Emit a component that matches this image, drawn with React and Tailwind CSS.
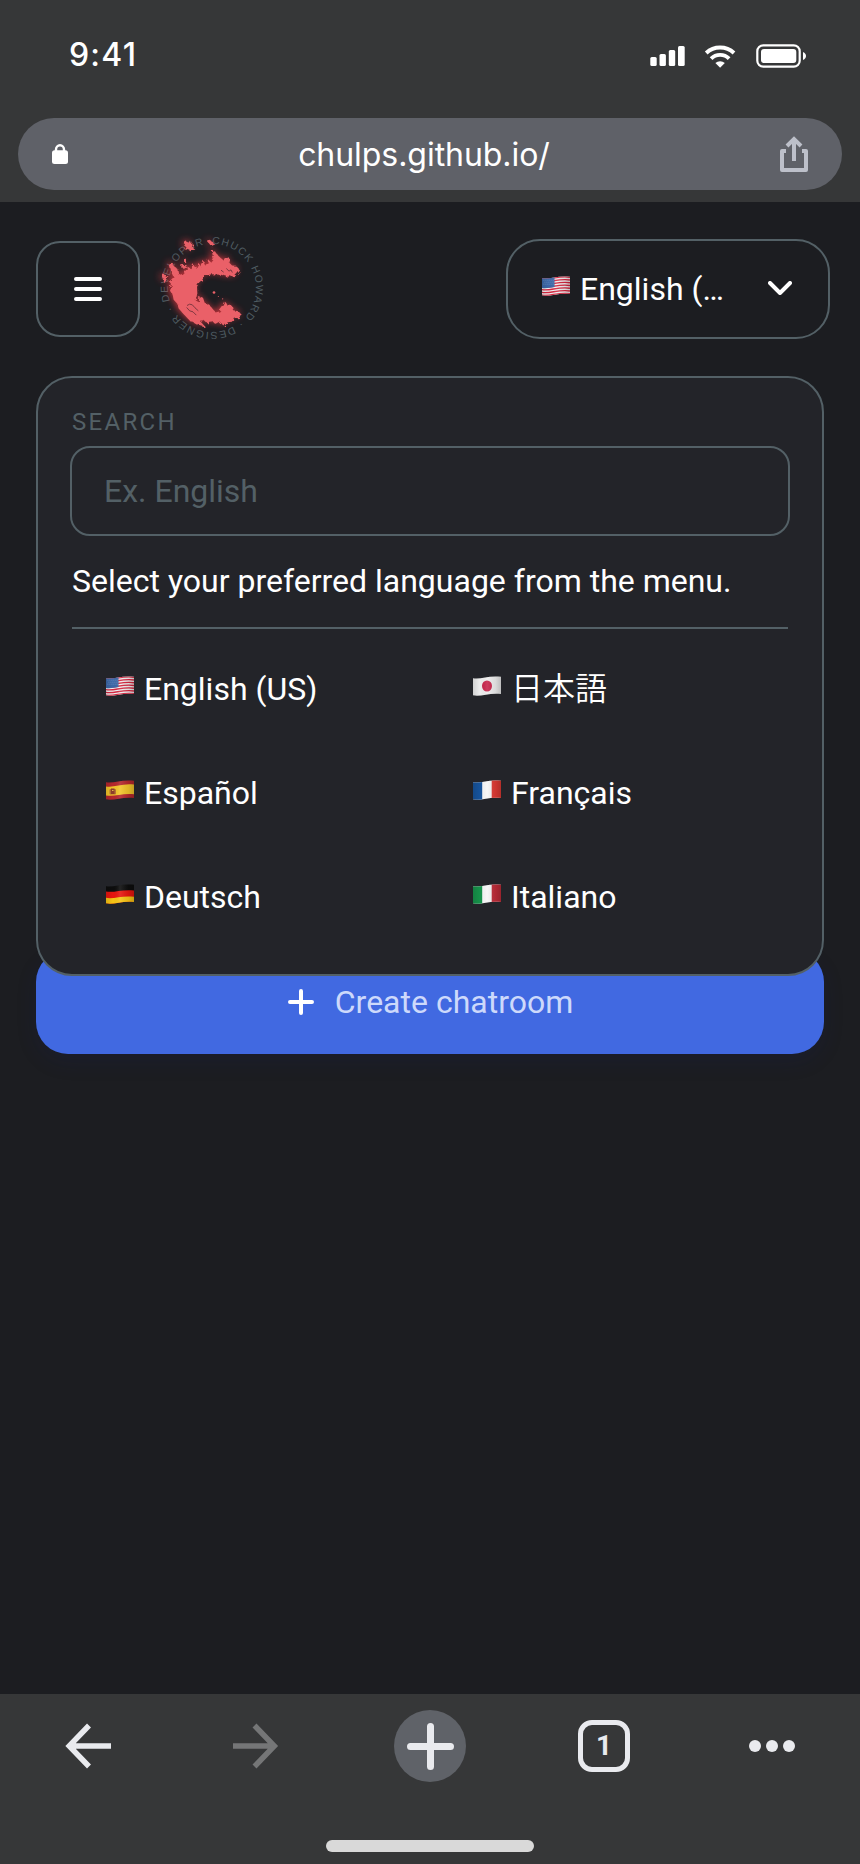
function FlagArt({ code }) {
  if (code === 'us')
    return (
      <g>
        <rect y="-2" width="28" height="26" fill="#f1eef0" />
        {[0, 1, 2, 3, 4, 5, 6].map((i) => (
          <path key={i} d={`M0 ${2.6 + i * 2.75} C8 ${4.2 + i * 2.75} 16 ${-0.6 + i * 2.75} 28 ${1.2 + i * 2.75}`} stroke="#d6263f" strokeWidth="1.4" fill="none" />
        ))}
        <path d="M0 0H12.5V11C8 11.800 4 12.500 0 12Z" fill="#3c68a8" />
        <path d="M1.5 4.200H12M2.500 6.200H12M1.500 8.200H12" stroke="#86a5cf" strokeWidth=".7" strokeDasharray=".8 1.2" />
      </g>
    );
  if (code === 'jp')
    return (
      <g>
        <rect width="28" height="20" fill="#eeeeee" />
        <ellipse cx="14" cy="10" rx="5" ry="5.6" fill="#c8264c" />
      </g>
    );
  if (code === 'es')
    return (
      <g>
        <rect width="28" height="20" fill="#b5272d" />
        <path d="M0 6.5C8 8 16 3 28 4.600V14.200C16 13 8 17 0 15.500Z" fill="#f3c52a" />
        <rect x="3.5" y="9" width="6.5" height="5.5" rx="1" fill="#b87531" />
        <path d="M5 8.500H8.500V14H5Z" fill="#8f3d2b" />
        <path d="M6 10.500H7.500" stroke="#e5b94a" />
      </g>
    );
  if (code === 'de')
    return (
      <g>
        <rect width="28" height="20" fill="#0d0d0d" />
        <path d="M0 7.500C8 9 16 5 28 6.500V20H0Z" fill="#e8150f" />
        <path d="M0 13.800C8 15.300 16 11.200 28 12.800V22H0Z" fill="#f7c515" />
      </g>
    );
  const left = code === 'fr' ? '#16539b' : '#16924a';
  const right = code === 'fr' ? '#e03a34' : '#bf2c39';
  return (
    <g>
      <rect width="28" height="20" fill="#f7f7f7" />
      <rect width="9.2" height="20" fill={left} />
      <rect x="18.7" width="9.3" height="20" fill={right} />
    </g>
  );
}

function Flag({ code, id }) {
  return (
    <svg className="h-5 w-7 shrink-0" viewBox="0 0 28 20" aria-hidden="true">
      <defs>
        <clipPath id={`clip-${id}`}>
          <path d="M0 2.200C8 3.600 16 -1 28 .8V18C16 16.600 8 21 0 19.300Z" />
        </clipPath>
        <linearGradient id={`shade-${id}`}>
          <stop offset="0" stopColor="#000" stopOpacity=".12" />
          <stop offset=".25" stopColor="#000" stopOpacity="0" />
          <stop offset=".5" stopColor="#fff" stopOpacity=".1" />
          <stop offset=".8" stopColor="#000" stopOpacity=".08" />
          <stop offset="1" stopColor="#000" stopOpacity=".2" />
        </linearGradient>
      </defs>
      <g clipPath={`url(#clip-${id})`}>
        <FlagArt code={code} />
        <rect width="28" height="20" fill={`url(#shade-${id})`} />
      </g>
    </svg>
  );
}

function Logo() {
  return (
    <svg className="h-[117px] w-[120px] overflow-visible" viewBox="400 30 360 350" aria-label="Chuck Howard">
      <defs>
        <path id="ring" d="M577 71.500A132 132 0 1 1 576.900 71.500" />
        <filter id="glow" x="-30%" y="-30%" width="160%" height="160%">
          <feGaussianBlur stdDeviation="11" />
        </filter>
        <filter id="rough" x="-10%" y="-10%" width="120%" height="120%">
          <feTurbulence type="turbulence" baseFrequency="0.055" numOctaves="2" seed="4" result="n" />
          <feDisplacementMap in="SourceGraphic" in2="n" scale="12" />
        </filter>
        <g id="splash" transform="translate(405 30)">
          <path d="M80 38l9-8 7 4 3-6 5 9 8-1-6 8 7 7-9 2-3 7-7-8-8 4 2-9z" />
          <path d="M153 31l8-3 8 4 4 8-10 4-5-7z" />
          <path d="M165 56L176 61L187 75L202 88L215 77L221 83L218 94L229 105L241 106L250 118L240 129L232 138L221 134L212 136L194 130L165 128L146 132L137 145L128 152L121 166L122 186L117 207L127 212L128 194L139 199L144 214L158 220L167 231L177 243L188 240L199 226L207 211L213 223L226 223L229 236L245 239L258 253L244 260L232 258L226 271L213 272L203 285L192 273L180 280L172 272L151 275L141 266L129 268L149 289L124 281L98 266L80 247L66 231L62 217L51 205L48 190L40 178L46 160L38 150L51 137L44 122L38 96L47 93L53 105L62 111L65 128L76 133L84 125L79 118L94 117L92 105L105 113L110 97L118 110L126 94L131 105L139 84L145 102L152 96L154 83L164 94L171 85Z" />
          <path d="M16 134l8-8 3 9 12 2-10 6-5 12-5-10z" />
          <path d="M82 88l7-4 5 6-3 7-8-2z" />
          <path d="M74 101l10-1 8 3-9 5-9 1z" />
        </g>
      </defs>
      <text fill="#4f5c61" fontFamily="Liberation Sans" fontSize="31">
        <textPath href="#ring" textLength="803">CHUCK HOWARD · DESIGNER · DEVELOPER</textPath>
      </text>
      <use href="#splash" fill="#ff3b45" opacity=".75" filter="url(#glow)" />
      <g filter="url(#rough)" transform="translate(3 1)">
        <use href="#splash" fill="#ea6168" />
      </g>
      <g fill="#ea6168">
        <circle cx="583" cy="217" r="4" />
        <circle cx="596" cy="229" r="1.500" />
        <circle cx="609" cy="236" r="1.800" />
        <circle cx="613" cy="246" r="1.500" />
      </g>
      <path d="M620 145l8 8 6-4 4 8M604 150l8 6M502 256l8-4 8 2 8 9 10 9M501 262l9 10 10 3 10 10" stroke="#6b3038" strokeWidth="2.500" fill="none" />
    </svg>
  );
}

function StatusBar() {
  return (
    <div className="flex h-[118px] items-start justify-between pl-[69px] pr-[53px]">
      <span className="mt-[35px] text-[32px]/[40px] font-medium tracking-[1.2px] text-white [font-family:Inter,sans-serif]">9:41</span>
      <svg className="mt-[42px] h-7 w-[158px]" viewBox="0 0 158 28" fill="#fff" aria-hidden="true">
        <rect x="1.3" y="15" width="6.400" height="9" rx="1.500" />
        <rect x="10.500" y="12" width="6.400" height="12" rx="1.500" />
        <rect x="19.800" y="8" width="6.400" height="16" rx="1.500" />
        <rect x="29" y="4" width="6.700" height="20" rx="1.500" />
        <g fill="none" stroke="#fff" strokeWidth="3.900">
          <path d="M57.200 11a20.500 20.500 0 0 1 27.800 0" />
          <path d="M62.100 16.600a12.700 12.700 0 0 1 18 0" />
        </g>
        <path d="M66.400 21a6.900 6.900 0 0 1 9.400 0L71.100 25.700z" />
        <rect x="108.300" y="3.300" width="42.400" height="21.400" rx="6" fill="none" stroke="#fff" strokeWidth="2.200" />
        <rect x="112" y="7" width="35.300" height="14" rx="3" />
        <path d="M154 10c4 1.500 4 6.500 0 8z" />
      </svg>
    </div>
  );
}

const languages = [
  { code: 'us', name: 'English (US)' },
  { code: 'jp', name: '日本語' },
  { code: 'es', name: 'Español' },
  { code: 'fr', name: 'Français' },
  { code: 'de', name: 'Deutsch' },
  { code: 'it', name: 'Italiano' },
];

export default function App() {
  return (
    <div className="flex h-[1864px] w-[860px] flex-col overflow-hidden bg-[#1c1d21] text-[32px]/[40px] text-white [font-family:Roboto,'Noto_Sans_CJK_JP',sans-serif]">
      <header className="h-[202px] shrink-0 bg-[#363738]">
        <StatusBar />
        <div className="mx-[18px] flex h-[72px] items-center justify-between rounded-full bg-[#5f6168] px-[34px]">
          <svg className="h-5 w-4" viewBox="0 0 16 20" aria-hidden="true">
            <path d="M4 9V5.500a4 4.200 0 0 1 8 0V9" fill="none" stroke="#fff" strokeWidth="2.400" />
            <rect y="6.300" width="16" height="13.700" rx="2.500" fill="#fff" />
          </svg>
          <span className="pt-0.5 text-[32px]/[40px] tracking-[-0.05px] [font-family:Inter,sans-serif]">chulps.github.io/</span>
          <svg className="h-9 w-7" viewBox="0 0 28 36" fill="none" stroke="#bdc0ca" strokeWidth="4" aria-hidden="true">
            <path d="M6 15H2V34H26V15H22" strokeLinejoin="round" />
            <path d="M14 25V3M7 10l7-7 7 7" />
          </svg>
        </div>
      </header>

      <main className="flex-1 px-9">
        <div className="-mr-1.5 flex h-[174px] items-start pt-[37px]">
          <button className="mt-0.5 flex h-24 w-[104px] items-center justify-center rounded-3xl border-2 border-[#536066]">
            <svg className="h-6 w-7" viewBox="0 0 28 24" stroke="#fff" strokeWidth="4" strokeLinecap="round" aria-hidden="true">
              <path d="M2 2H26M2 12H26M2 22H26" />
            </svg>
          </button>
          <div className="-mt-[9px] ml-[13px]"><Logo /></div>
          <button className="ml-auto flex h-[100px] w-[324px] items-center rounded-[34px] border-2 border-[#536066] pl-[34px] pr-9">
            <span className="-mt-1.5"><Flag code="us" id="current" /></span>
            <span className="ml-2.5 whitespace-nowrap">English (…</span>
            <svg className="-mt-0.5 ml-auto h-3.5 w-6" viewBox="0 0 24 14" fill="none" stroke="#fff" strokeWidth="4" strokeLinecap="round" strokeLinejoin="round" aria-hidden="true">
              <path d="M2 2l10 10L22 2" />
            </svg>
          </button>
        </div>

        <section className="relative z-10 h-[600px] rounded-[36px] border-2 border-[#536066] bg-[#232429] px-8 pt-7">
          <label className="block pl-0.5 text-2xl/[32px] tracking-[2.3px] text-[#536066]">SEARCH</label>
          <div className="mt-2 flex h-[90px] items-center rounded-[20px] border-2 border-[#536066] px-8 text-[#536066]">Ex. English</div>
          <p className="mt-[25px] pl-0.5">Select your preferred language from the menu.</p>
          <hr className="mx-0.5 mt-[26px] border-t-2 border-[#536066]" />
          <ul className="ml-0.5 mt-2 grid grid-cols-[367px_1fr]">
            {languages.map((l) => (
              <li key={l.code} className="flex h-[104px] items-center pl-[34px]">
                <span className="-mt-1.5"><Flag code={l.code} id={l.code} /></span>
                <span className={l.code === 'jp' ? 'ml-2.5 font-[350]' : 'ml-2.5'}>{l.name}</span>
              </li>
            ))}
          </ul>
        </section>

        <button className="-mt-[26px] flex h-[104px] w-full items-center justify-center gap-[21px] rounded-[32px] bg-[#4169e1] pl-px text-[#cdd9fb] shadow-[0_8px_20px_rgba(20,30,100,0.16)]">
          <svg className="size-[26px]" viewBox="0 0 26 26" stroke="#fff" strokeWidth="4" strokeLinecap="round" aria-hidden="true">
            <path d="M13 2V24M2 13H24" />
          </svg>
          <span>Create chatroom</span>
        </button>
      </main>

      <footer className="flex h-[170px] shrink-0 flex-col items-center justify-between bg-[#363738] pb-3 pt-4">
        <nav className="flex h-[72px] w-full items-center pl-[65px]">
          <svg className="size-[46px]" viewBox="0 0 46 46" fill="none" stroke="#e9eaee" strokeWidth="5.500" aria-hidden="true">
            <path d="M46 23H5M24 2.500L4.200 23L24 43.500" />
          </svg>
          <svg className="ml-[122px] size-[46px]" viewBox="0 0 46 46" fill="none" stroke="#757677" strokeWidth="5.500" aria-hidden="true">
            <path d="M0 23H41M21.500 2.500L41.300 23L21.500 43.500" />
          </svg>
          <span className="ml-[115px] flex size-[72px] items-center justify-center rounded-full bg-[#5f6268]">
            <svg className="size-[47px]" viewBox="0 0 47 47" stroke="#e9eaee" strokeWidth="7" strokeLinecap="round" aria-hidden="true">
              <path d="M23.500 3.500V43.500M3.500 23.500H43.500" />
            </svg>
          </span>
          <span className="ml-28 flex size-[52px] items-center justify-center rounded-[14px] border-[5.500px] border-[#e9eaee] text-[28px]/[40px] font-bold text-[#e9eaee]">1</span>
          <svg className="ml-[119px] h-3 w-[46px]" viewBox="0 0 46 12" fill="#e9eaee" aria-hidden="true">
            <circle cx="6" cy="6" r="6" /><circle cx="23" cy="6" r="6" /><circle cx="40" cy="6" r="6" />
          </svg>
        </nav>
        <div className="h-3 w-52 rounded-full bg-[#d9d9d9]" />
      </footer>
    </div>
  );
}
